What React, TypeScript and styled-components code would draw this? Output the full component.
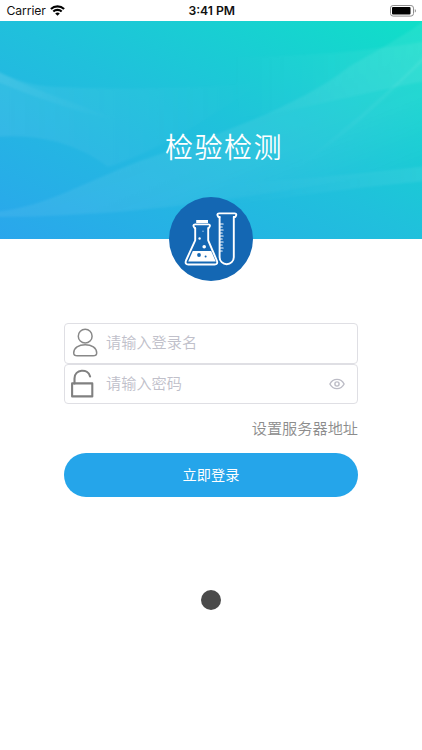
import React, { ReactElement, useState } from "react";
import styled, { createGlobalStyle } from "styled-components";

function StatusBar(): ReactElement {
  return (
    <StatusContainer>
      <StatusLeft>
        <Carrier>Carrier</Carrier>
        <svg width='15' height='11' viewBox='0 0 15 11'>
          <g fill='none' stroke='#000' strokeWidth='2.1'>
            <path d='M.9 4.1a9.4 9.4 0 0 1 13.2 0' />
            <path d='M3.3 6.6a6 6 0 0 1 8.4 0' />
          </g>
          <path d='M7.5 10.8 5.2 8.5a3.3 3.3 0 0 1 4.6 0z' />
        </svg>
      </StatusLeft>
      <Clock>3:41 PM</Clock>
      <StatusRight>
        <svg width='27' height='12' viewBox='0 0 27 12'>
          <rect
            x='0.5'
            y='0.5'
            width='23'
            height='10.6'
            rx='2.6'
            fill='none'
            stroke='#8e8e8e'
          />
          <rect x='2' y='2' width='18.5' height='7.6' rx='1' />
          <path d='M24.8 4v3.6c1.5-.5 1.5-3.1 0-3.6z' fill='#8e8e8e' />
        </svg>
      </StatusRight>
    </StatusContainer>
  );
}

function Waves(): ReactElement {
  return (
    <WavesSvg viewBox='0 0 422 218' preserveAspectRatio='none'>
      <defs>
        <linearGradient id='fadeRight' x1='0' x2='1' y1='0' y2='0'>
          <stop offset='0' stopColor='#fff' stopOpacity='0.07' />
          <stop offset='1' stopColor='#fff' stopOpacity='0' />
        </linearGradient>
        <linearGradient id='streak' x1='0' x2='1' y1='0' y2='0'>
          <stop offset='0' stopColor='#fff' stopOpacity='0' />
          <stop offset='1' stopColor='#fff' stopOpacity='0.07' />
        </linearGradient>
        <linearGradient
          id='sweep'
          gradientUnits='userSpaceOnUse'
          x1='200'
          x2='250'
          y1='90'
          y2='215'
        >
          <stop offset='0' stopColor='#fff' stopOpacity='0.07' />
          <stop offset='0.5' stopColor='#fff' stopOpacity='0.06' />
          <stop offset='1' stopColor='#fff' stopOpacity='0' />
        </linearGradient>
        <filter id='soft' x='-5%' y='-5%' width='110%' height='110%'>
          <feGaussianBlur stdDeviation='0.8' />
        </filter>
      </defs>
      <g filter='url(#soft)'>
        <path
          d='M-5 49C15 59 35 66 60 66C130 69 190 68 260 62C220 90 160 130 108 146C80 124 40 112 -5 116z'
          fill='url(#fadeRight)'
        />
        <path
          d='M-5 49C30 68 80 84 122 100C85 94 40 78 -5 60z'
          fill='url(#fadeRight)'
        />
        <path
          d='M-5 191C45 186 80 163 140 140C220 113 300 85 350 45C385 25 405 14 427 -2V145C330 160 180 196 -5 196z'
          fill='url(#sweep)'
        />
        <path
          d='M230 36C310 36 370 30 427 20V60C370 70 300 90 240 96z'
          fill='url(#streak)'
        />
        <path
          d='M290 150C330 120 380 80 427 32V37C395 66 360 105 310 138z'
          fill='url(#streak)'
        />
        <path
          d='M230 164C300 158 370 152 427 145V160C360 166 300 174 230 184z'
          fill='url(#streak)'
        />
      </g>
    </WavesSvg>
  );
}

function Logo(): ReactElement {
  return (
    <LogoCircle>
      <svg width='84' height='84' viewBox='0 0 84 84'>
        <g
          fill='none'
          stroke='#fff'
          strokeWidth='1.9'
          strokeLinecap='round'
          strokeLinejoin='round'
        >
          <path d='M26.2 31v12.3L17 63.5q-1.4 4 2.3 4h26.2q3.8 0 2.3-4L39.2 43.3V31' />
          <path d='M25.6 31q-2.6-3.6.6-3.6h13q3.2 0 .6 3.6' />
          <path d='M50.6 20v40.2a7.1 7 0 0 0 14.2 0V20' />
          <path d='M50.6 20h-1.2q-2.3-3.6.6-3.6h15.7q2.9 0 .6 3.6h-1.5' />
          <path
            d='M51.5 27h2.6M51.5 30h1.7M51.5 33h2.6M51.5 36h1.7M51.5 39h2.6M51.5 42h1.7M51.5 45h2.6M51.5 48h1.7M51.5 51h2.6M51.5 54h1.7'
            strokeWidth='1.2'
          />
        </g>
        <rect x='27.2' y='23' width='11.8' height='3' fill='#fff' />
        <path d='M23.8 54h18.4l4.6 10.6H19.2z' fill='#fff' />
        <circle cx='30' cy='58' r='1.9' fill='#1467b3' />
        <circle cx='36.6' cy='59.6' r='1' fill='#1467b3' />
        <circle cx='35.2' cy='49.8' r='1.8' fill='#fff' />
        <circle cx='30.6' cy='41.5' r='1.2' fill='#fff' />
        <circle cx='34' cy='34.3' r='0.7' fill='#a9c9e8' />
      </svg>
    </LogoCircle>
  );
}

function App(): ReactElement {
  const [visible, setVisible] = useState(false);

  return (
    <Page>
      <GlobalStyle />
      <StatusBar />
      <Hero>
        <Waves />
        <Title>检验检测</Title>
        <Logo />
      </Hero>
      <Form onSubmit={(e) => e.preventDefault()}>
        <Field>
          <FieldIcon>
            <svg width='28' height='30' viewBox='0 0 28 30'>
              <g fill='none' stroke='#888' strokeWidth='1.5'>
                <ellipse cx='14.2' cy='8.2' rx='6.9' ry='6.9' />
                <path d='M14.2 16.7c-6.4 0-11.5 3.2-11.5 8.2 0 2.1 1.3 2.8 3.6 2.8h15.8c2.3 0 3.6-.7 3.6-2.8 0-5-5.1-8.2-11.5-8.2z' />
              </g>
            </svg>
          </FieldIcon>
          <Input placeholder='请输入登录名' />
        </Field>
        <Field>
          <FieldIcon>
            <svg width='28' height='30' viewBox='0 0 28 30'>
              <g
                fill='none'
                stroke='#808080'
                strokeWidth='2.1'
                strokeLinejoin='round'
              >
                <rect x='1.1' y='14.4' width='20.2' height='13' />
                <path
                  d='M3.5 14.4V9.4c0-9.4 13.6-10.2 15.6-2'
                  strokeLinecap='round'
                />
              </g>
            </svg>
          </FieldIcon>
          <Input type={visible ? "text" : "password"} placeholder='请输入密码' />
          <EyeButton type='button' onClick={() => setVisible(!visible)}>
            <svg width='16' height='12' viewBox='0 0 16 12'>
              <g fill='none' stroke='#bcbcc6' strokeWidth='1.4'>
                <path d='M.9 6C4 -.2 12-.2 15.1 6C12 12.2 4 12.2.9 6z' />
                <circle cx='8' cy='6' r='2.1' />
              </g>
            </svg>
          </EyeButton>
        </Field>
        <ServerLink>设置服务器地址</ServerLink>
        <LoginButton type='submit'>立即登录</LoginButton>
      </Form>
      <Dot />
    </Page>
  );
}

export default App;

const GlobalStyle = createGlobalStyle`
  body {
    margin: 0;
    background: #fff;
    font-family: "Noto Sans CJK SC", sans-serif;
  }
  * {
    box-sizing: border-box;
  }
`;
const Page = styled.div`
  display: flex;
  flex-direction: column;
  align-items: center;
  height: 750px;
  overflow: hidden;
`;
const StatusContainer = styled.div`
  display: grid;
  grid-template-columns: 1fr auto 1fr;
  align-items: center;
  width: 100%;
  height: 21px;
  padding: 0 5px 0 6.5px;
  font-family: Inter, "Liberation Sans", sans-serif;
  font-size: 12.2px;
  line-height: 21px;
  color: #111;
`;
const StatusLeft = styled.div`
  display: flex;
  align-items: center;
  gap: 4.5px;
`;
const Carrier = styled.span`
  letter-spacing: -0.1px;
`;
const Clock = styled.div`
  font-weight: 600;
`;
const StatusRight = styled.div`
  display: flex;
  justify-content: flex-end;
`;
const Hero = styled.div`
  position: relative;
  display: flex;
  flex-direction: column;
  align-items: center;
  flex: none;
  width: 100%;
  height: 218px;
  background: linear-gradient(
    to top right,
    #2aa6ec 0%,
    #20c0dc 50%,
    #10dfc8 100%
  );
`;
const WavesSvg = styled.svg`
  position: absolute;
  top: 0;
  left: 0;
  width: 100%;
  height: 100%;
`;
const Title = styled.div`
  position: relative;
  padding: 105px 0 0 26px;
  font-size: 28px;
  font-weight: 350;
  line-height: 40px;
  letter-spacing: 1.5px;
  color: #fff;
`;
const LogoCircle = styled.div`
  position: absolute;
  bottom: -42px;
  left: calc(50% - 42px);
  width: 84px;
  height: 84px;
  border-radius: 50%;
  background: #1467b3;
`;
const Form = styled.form`
  display: flex;
  flex-direction: column;
  width: 294px;
  margin-top: 84px;
`;
const Field = styled.div`
  display: flex;
  align-items: center;
  height: 40.5px;
  padding: 0 12px 0 6px;
  border: 1px solid #dfdfe4;
  border-radius: 4px;
`;
const FieldIcon = styled.div`
  display: flex;
  width: 35px;
`;
const Input = styled.input`
  flex: 1;
  min-width: 0;
  height: 30px;
  padding: 0 0 4px;
  border: 0;
  outline: 0;
  background: none;
  font-family: inherit;
  font-size: 15.2px;
  font-weight: 350;
  &::placeholder {
    color: #c0c0ca;
  }
`;
const EyeButton = styled.button`
  display: flex;
  padding: 0;
  border: 0;
  background: none;
`;
const ServerLink = styled.div`
  margin-top: 12px;
  font-size: 15.2px;
  line-height: 22px;
  text-align: right;
  font-weight: 350;
  color: #8c8c8c;
`;
const LoginButton = styled.button`
  height: 44px;
  margin-top: 15px;
  padding: 0 0 2px;
  border: 0;
  border-radius: 22px;
  background: #25a5ea;
  font-family: inherit;
  font-size: 14.2px;
  color: #fff;
`;
const Dot = styled.div`
  width: 20px;
  height: 20px;
  margin-top: 92.5px;
  border-radius: 50%;
  background: #4a4a4a;
`;
